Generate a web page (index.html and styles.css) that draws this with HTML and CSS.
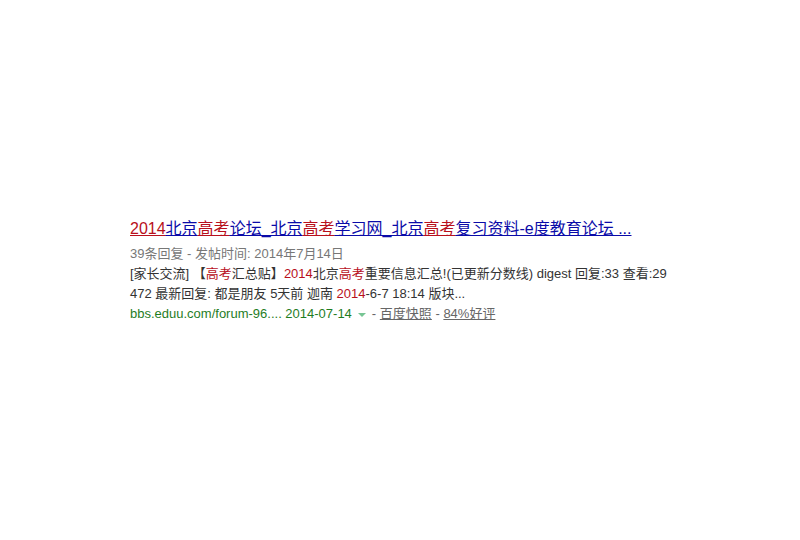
FILE: index.html
```html
<!DOCTYPE html>
<html lang="zh-CN">
<head>
  <meta charset="UTF-8" />
  <meta name="viewport" content="width=device-width, initial-scale=1.0" />
  <title>2014北京高考论坛</title>
  <link rel="stylesheet" href="styles.css">
</head>
<body>
  <main class="result">
    <h3 class="title"><a href="#"><em>2014</em>北京<em>高考</em>论坛_北京<em>高考</em>学习网_北京<em>高考</em>复习资料-e度教育论坛 ...</a></h3>
    <p class="meta">39条回复 - 发帖时间: 2014年7月14日</p>
    <p class="abstract">[家长交流] 【<em>高考</em>汇总贴】<em>2014</em>北京<em>高考</em>重要信息汇总!(已更新分数线) digest 回复:33 查看:29<br>472 最新回复: 都是朋友 5天前 迦南 <em>2014</em>-6-7 18:14 版块...</p>
    <div class="footer">
      <span class="url">bbs.eduu.com/forum-96.... 2014-07-14</span>
      <button class="more" type="button" aria-label="更多"><svg width="8" height="4" viewBox="0 0 8 4"><path d="M0 0h8L4 4z" fill="#77c594"/></svg></button>
      <span class="links">- <a href="#">百度快照</a> - <a href="#">84%好评</a></span>
    </div>
  </main>
</body>
</html>
```

FILE: styles.css
```css
* {
  box-sizing: border-box;
  margin: 0;
  padding: 0;
}
body {
  min-height: 100vh;
  display: flex;
  justify-content: center;
  align-items: center;
  background-color: #fff;
  color: #333;
  font-family: "Liberation Sans", Arial, "Noto Sans CJK SC", sans-serif;
  font-size: 13px;
  line-height: 20px;
}
.result {
  width: 540px;
}
em {
  font-style: normal;
  color: #b8101c;
}
.title {
  font-size: 16px;
  font-weight: normal;
  line-height: 26px;
  margin-bottom: 2px;
  white-space: nowrap;
}
.title a {
  color: #0a0aa8;
  text-decoration-skip-ink: none;
}
.title em {
  text-decoration: underline;
}
.meta {
  color: #777;
}
.abstract {
  white-space: nowrap;
}
.footer {
  display: flex;
  align-items: center;
  color: #666;
}
.url {
  color: #1f7d1f;
}
.more {
  width: 20px;
  height: 20px;
  display: flex;
  align-items: center;
  justify-content: center;
  padding-top: 2px;
  border: none;
  background: none;
  cursor: pointer;
}
.links a {
  color: #666;
  text-decoration-skip-ink: none;
}
```
